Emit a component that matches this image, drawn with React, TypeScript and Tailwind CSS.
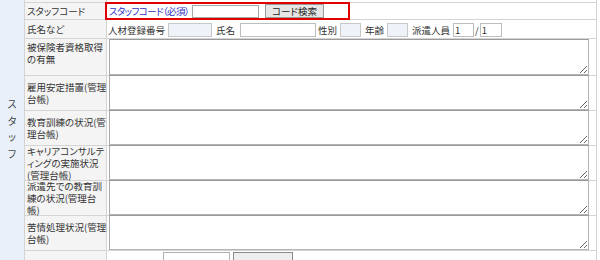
import React from "react";

const labelCls =
  "w-[82px] shrink-0 bg-[#f4f4f4] border-r border-[#d4d4d4] pl-[2px] flex items-center whitespace-nowrap";
const rowCls = "flex border-b border-[#d4d4d4]";

function TA({ h }: { h: string }) {
  return (
    <textarea
      className={`block w-[480px] ${h} border border-[#b4b4b4] border-t-[#9a9a9a] border-l-[#a8a8a8] bg-white`}
    />
  );
}

const rows: { lines: string[]; h: string; ta: string; extra?: string }[] = [
  { lines: ["被保険者資格取得", "の有無"], h: "h-[37px]", ta: "h-[36px]", extra: "items-start pt-[2px]" },
  { lines: ["雇用安定措置(管理", "台帳)"], h: "h-[35px]", ta: "h-[35px]" },
  { lines: ["教育訓練の状況(管", "理台帳)"], h: "h-[35px]", ta: "h-[35px]" },
  { lines: ["キャリアコンサルテ", "ィングの実施状況", "(管理台帳)"], h: "h-[35px]", ta: "h-[35px]" },
  { lines: ["派遣先での教育訓", "練の状況(管理台", "帳)"], h: "h-[35px]", ta: "h-[35px]" },
  { lines: ["苦情処理状況(管理", "台帳)"], h: "h-[35px]", ta: "h-[35px]" },
];

export default function App() {
  return (
    <div className="w-[600px] h-[260px] overflow-hidden bg-white text-[#333] text-[9.5px] leading-[12px] font-['Noto_Sans_CJK_JP','Noto_Sans',sans-serif] [font-feature-settings:'palt']">
      <div className="flex w-[597px]">
        {/* left vertical column */}
        <div className="w-[25px] shrink-0 bg-[#e9f0fa] border-r border-[#d4d4d4] flex flex-col items-center pt-[96px] text-[10px] leading-[16.5px] text-[#444]">
          <span>ス</span>
          <span>タ</span>
          <span>ッ</span>
          <span>フ</span>
        </div>
        <div className="flex-1 flex flex-col border-r border-[#d4d4d4]">
          {/* top stub */}
          <div className={`${rowCls} h-[3px]`}>
            <div className="w-[82px] shrink-0 bg-[#f4f4f4] border-r border-[#d4d4d4]" />
            <div className="flex-1" />
          </div>
          {/* row 1 */}
          <div className={`${rowCls} h-[17px]`}>
            <div className={labelCls}>スタッフコード</div>
            <div className="flex-1 relative">
              <div className="relative z-10 -ml-[2px] -mt-[1px] w-[245px] h-[18px] border-2 border-[#e00000] flex items-center pl-[2px]">
                <span className="text-[#3030c0] tracking-[-0.6px]">スタッフコード（必須）</span>
                <input
                  className="ml-[3px] w-[67px] h-[13px] border border-[#a9a9a9] bg-white"
                  readOnly
                />
                <button className="ml-[6px] w-[59px] h-[14px] border border-[#9a9a9a] bg-[#e6e6e6] text-[9.5px] leading-[12px] text-[#222] flex items-center justify-center">
                  コード検索
                </button>
              </div>
            </div>
          </div>
          {/* row 2 */}
          <div className={`${rowCls} h-[19px]`}>
            <div className={labelCls}>氏名など</div>
            <div className="flex-1 flex items-center pl-[1px] pt-[1px]">
              <span>人材登録番号</span>
              <input readOnly className="ml-[3px] w-[44px] h-[14px] border border-[#c8c8c8] bg-[#eef3fa]" />
              <span className="ml-[4px]">氏名</span>
              <input readOnly className="ml-[5px] w-[76px] h-[14px] border border-[#bdbdbd] bg-white" />
              <span className="ml-[2px]">性別</span>
              <input readOnly className="ml-[3px] w-[21px] h-[14px] border border-[#c8c8c8] bg-[#eef3fa]" />
              <span className="ml-[4px]">年齢</span>
              <input readOnly className="ml-[3px] w-[21px] h-[14px] border border-[#c8c8c8] bg-[#eef3fa]" />
              <span className="ml-[4px]">派遣人員</span>
              <input readOnly value="1" className="ml-[3px] w-[21px] h-[14px] border border-[#bdbdbd] bg-white text-[9.5px] px-[1px]" />
              <span className="ml-[1px]">/</span>
              <input readOnly value="1" className="ml-[1px] w-[22px] h-[14px] border border-[#bdbdbd] bg-white text-[9.5px] px-[1px]" />
            </div>
          </div>
          {rows.map((r, i) => (
            <div key={i} className={`${rowCls} ${r.h}`}>
              <div className={`${labelCls} ${r.extra ?? ""}`}>
                <div>
                  {r.lines.map((l, j) => (
                    <div key={j}>{l}</div>
                  ))}
                </div>
              </div>
              <div className="flex-1 flex items-end pl-[2px]">
                <TA h={r.ta} />
              </div>
            </div>
          ))}
          {/* bottom partial row */}
          <div className="flex h-[20px]">
            <div className="w-[82px] shrink-0 bg-[#f4f4f4] border-r border-[#d4d4d4]" />
            <div className="flex-1 flex pl-[56px] pt-[1px]">
              <div className="w-[67px] h-[18px] border border-[#b0b0b0]" />
              <div className="ml-[3px] w-[60px] h-[18px] border border-[#8a8a8a] bg-[#eeeeee]" />
            </div>
          </div>
        </div>
      </div>
    </div>
  );
}
